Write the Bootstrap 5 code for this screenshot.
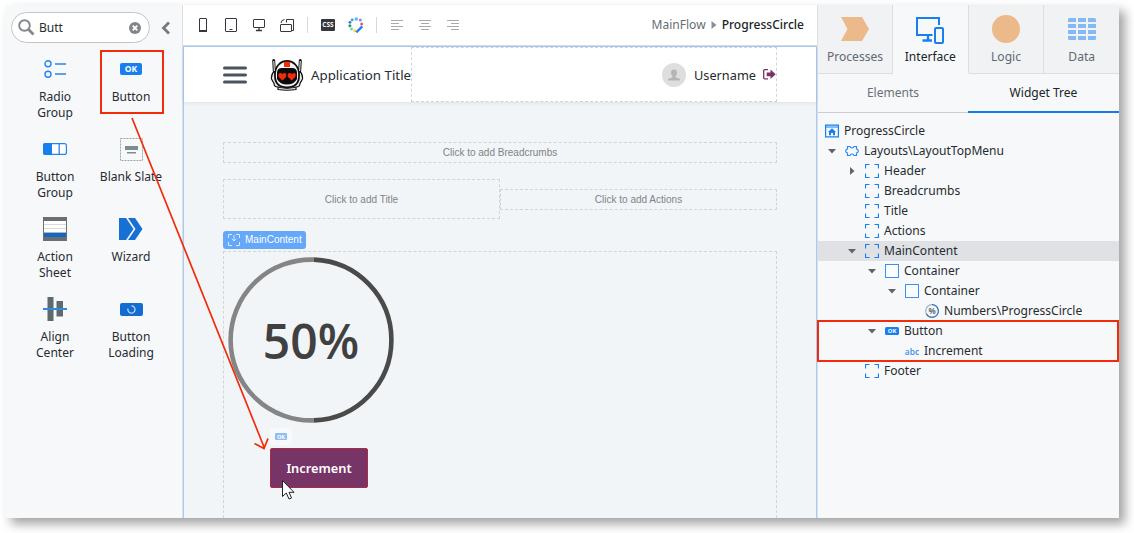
<!DOCTYPE html>
<html lang="en">
<head>
<meta charset="utf-8">
<meta name="viewport" content="width=device-width, initial-scale=1">
<title>ProgressCircle</title>
<link href="https://cdn.jsdelivr.net/npm/bootstrap@5.3.0/dist/css/bootstrap.min.css" rel="stylesheet">
<style>
html{overflow:hidden}
body{background:#fff;font-family:"Noto Sans","Open Sans",sans-serif;font-size:12.05px;line-height:16px;color:#272b30;min-height:100vh;padding:5px}
svg{display:block;flex:none}
.studio{width:1114px;height:513px;background:#f6f8fa;box-shadow:6px 6px 10px rgba(0,0,0,.36)}
.toolbox{width:177px}
.search-pill{width:139px;height:31px;margin:7px 0 0 6px;border:1px solid #c3c5c8;border-radius:16px;background:#fff;padding:0 8px 0 6px}
.widgets{display:grid;grid-template-columns:76px 76px;grid-auto-rows:80px;margin:8px 0 0 12px}
.widget-icon{height:36px;margin-bottom:2px}
.widget-name{width:64px}
.picked{position:absolute;left:7px;top:-1px;width:64px;height:64px;border:2px solid #f22c0a}
.stage{width:636px;border-left:1px solid #dcdfe3;border-right:1px solid #dcdfe3;background:#fff}
.tools{height:41px;border-bottom:1px solid #dadde1;padding-left:6px}
.tool{width:28px}
.rule{width:1px;height:16px;background:#d5d8dc;margin:0 6px}
.crumbs{padding-right:13px}
.flow{color:#666d74}
.here{font-weight:500;color:#202428}
.page-canvas{border:1px solid #a6cbf9;border-bottom:0;background:#f1f5f8}
.app-header{height:55px;background:#fff;padding:0 39px;box-shadow:0 1px 4px rgba(60,80,100,.12)}
.robot{margin-left:23px}
.app-title{margin-left:7px;font-size:13.3px;white-space:nowrap}
.user-name{margin:0 7px 0 8px;font-size:12.75px}
.page-body{padding:40px 39px 0}
.drop{border:1px dashed #d0d5d8}
.hint{font:10px/12px "Liberation Sans",sans-serif;color:#808486}
.crumb-drop{height:21px}
.title-line{margin:16px 0 12px}
.title-drop{width:277.500px;height:40px;padding-top:1px}
.action-drop{width:277.500px;height:21px;margin-top:1px}
.content-tag{width:83px;height:18px;margin-bottom:2px;background:#65a7f8;border-radius:3px;color:#fff;font:10px/18px "Liberation Sans",sans-serif;padding-left:5px}
.tag-text{margin-left:5px}
.main-drop{border-bottom:0}
.ring{margin:4.500px 0 0 4px}
.ring-text{font:600 48px "Open Sans",sans-serif;fill:#404040}
.ok-tab{width:22px;height:17px;margin:5.500px 0 3px 46px;background:#f8f9fa;border-radius:3px}
.purple{width:98px;height:40px;margin-left:46px;background:#763467;border:1px solid #ab2c3f;border-radius:2px;color:#fff;font-weight:600;font-size:12.8px}
.side{width:301px}
.side-tab{height:69px;background:#f0f2f4;border-right:1px solid #dcdee1;border-bottom:1px solid #dcdee1;color:#616971;flex:1 1 0}
.side-tab:first-child{flex:0 0 75px}
.side-tab:last-child{border-right:0}
.side-tab.on{background:#f6f8fa;border-bottom-color:#f6f8fa;color:#202428}
.tab-pic{height:47px}
.tab-label{line-height:10px}
.sub{height:39px;border-bottom:1px solid #cbcdd0;color:#697078;flex:0 0 150px}
.sub.on{border-bottom:2px solid #147bec;color:#202428;flex:1}
.tree{padding-top:8px}
.tree-row{height:20px;white-space:nowrap}
.tree-row .caret-mark{margin-left:-20px;margin-right:6px}
.tree-row .glyph{margin-right:5px}
.l0{padding-left:7px}.l1{padding-left:27px}.l2{padding-left:47px}.l3{padding-left:67px}.l4{padding-left:87px}.l5{padding-left:107px}
.sel{background:#dfe1e4}
.marked{position:absolute;left:-1px;right:0;top:207px;height:42px;border:2px solid #f22c0a}
.overlay{position:absolute;left:0;top:0;pointer-events:none;z-index:5}
.ok{font-family:"Open Sans",sans-serif;font-weight:700;fill:#fff;text-anchor:middle}
</style>
</head>
<body>
<svg width="0" height="0" class="position-absolute">
<defs>
<symbol id="slot" viewBox="0 0 14 14"><path d="M.5 4.500V.5H4.500M9.500 .5H13.500V4.500M13.500 9.500V13.500H9.500M4.500 13.500H.5V9.500" fill="none" stroke="#1a80ee" stroke-width="1.200"/></symbol>
<symbol id="down" viewBox="0 0 14 14"><path d="M3 5H11L7 9.500Z" fill="#60656a"/></symbol>
<symbol id="right" viewBox="0 0 14 14"><path d="M5 3V11L9.500 7Z" fill="#60656a"/></symbol>
<symbol id="box" viewBox="0 0 14 14"><rect x=".5" y=".5" width="13" height="13" fill="#fafcff" stroke="#3a91f0"/></symbol>
</defs>
</svg>
<div class="studio d-flex">
  <aside class="toolbox">
    <div class="d-flex align-items-center">
      <div class="search-pill d-flex align-items-center">
        <svg width="17" height="17" viewBox="0 0 17 17" fill="none" stroke="#85888b"><circle cx="6.500" cy="6.500" r="5.300" stroke-width="1.900"/><path d="M10.300 10.300L15.500 15.500" stroke-width="2.800"/></svg>
        <span class="flex-grow-1 ps-1">Butt</span>
        <svg width="12" height="12" viewBox="0 0 12 12"><circle cx="6" cy="6" r="6" fill="#828588"/><path d="M3.700 3.700L8.300 8.300M8.300 3.700L3.700 8.300" stroke="#fff" stroke-width="1.900"/></svg>
      </div>
      <svg class="mt-2 ms-2" width="20" height="14" viewBox="0 0 20 14"><path d="M11 1.500L5.500 7L11 12.500" fill="none" stroke="#787b7e" stroke-width="2.800"/></svg>
    </div>
    <div class="widgets text-center">
      <div><div class="widget-icon d-flex align-items-center justify-content-center">
        <svg width="22" height="18" viewBox="0 0 22 18" fill="none" stroke="#2485ef" stroke-width="1.400"><circle cx="4" cy="3.800" r="3"/><circle cx="4" cy="14.200" r="3"/><path d="M11 4H22M11 14H22"/></svg></div>
        <div class="widget-name mx-auto">Radio Group</div></div>
      <div class="position-relative"><div class="widget-icon d-flex align-items-center justify-content-center">
        <svg width="22" height="12" viewBox="0 0 22 12"><rect width="22" height="12" rx="2" fill="#1780ee"/><text class="ok" x="11" y="9.200" font-size="8.500">OK</text></svg></div>
        <div class="widget-name mx-auto">Button</div><div class="picked"></div></div>
      <div><div class="widget-icon d-flex align-items-center justify-content-center">
        <svg width="24" height="12" viewBox="0 0 24 12"><rect x=".6" y=".6" width="22.800" height="10.800" rx="2" fill="#fff" stroke="#2485ef" stroke-width="1.200"/><path d="M2 0H9V12H2Q0 12 0 10V2Q0 0 2 0Z" fill="#1780ee"/><path d="M16.200 0V12" stroke="#2485ef" stroke-width="1.300"/></svg></div>
        <div class="widget-name mx-auto">Button Group</div></div>
      <div><div class="widget-icon d-flex align-items-center justify-content-center">
        <svg width="23" height="23" viewBox="0 0 23 23"><rect x=".5" y=".5" width="22" height="22" fill="none" stroke="#9aa5a8" stroke-dasharray="2 1"/><path d="M5 8H18V12H5ZM7 14H16V15.500H7Z" fill="#7f8c8d"/></svg></div>
        <div class="text-nowrap">Blank Slate</div></div>
      <div><div class="widget-icon d-flex align-items-center justify-content-center">
        <svg width="24" height="24" viewBox="0 0 24 24"><path fill="#6c6f71" d="M0 0H24V24H0Z"/><path fill="#fff" d="M1 4H23V15.500H1Z"/><path d="M1 7.500H23M1 11.500H23" stroke="#d8dadb"/><path fill="#1467c6" d="M1 16H23V20H1Z"/></svg></div>
        <div class="widget-name mx-auto">Action Sheet</div></div>
      <div><div class="widget-icon d-flex align-items-center justify-content-center">
        <svg width="24" height="22" viewBox="0 0 24 22"><path d="M0 0H7L14.500 11L7 22H0Z" fill="#1771d4"/><path d="M9 0H16L23.500 11L16 22H9L16.500 11Z" fill="#1771d4"/></svg></div>
        <div class="widget-name mx-auto">Wizard</div></div>
      <div><div class="widget-icon d-flex align-items-center justify-content-center">
        <svg width="24" height="24" viewBox="0 0 24 24"><path d="M4.500 0H10.500V24H4.500ZM13.500 4H20V19.500H13.500Z" fill="#5e6b6e"/><path d="M0 12H24" stroke="#3286e4" stroke-width="2"/></svg></div>
        <div class="widget-name mx-auto">Align Center</div></div>
      <div><div class="widget-icon d-flex align-items-center justify-content-center">
        <svg width="23" height="13" viewBox="0 0 23 13"><rect width="23" height="13" rx="2" fill="#146bd0"/><path d="M8 5.500A3.600 3.600 0 1 0 11.500 2.900" fill="none" stroke="#c4ddf7" stroke-width="1.200"/></svg></div>
        <div class="widget-name mx-auto">Button Loading</div></div>
    </div>
  </aside>

  <main class="stage d-flex flex-column">
    <div class="tools d-flex align-items-center">
      <div class="tool"><svg class="mx-auto" width="8" height="14" viewBox="0 0 8 14"><rect x=".5" y=".5" width="7" height="13" rx=".5" fill="none" stroke="#34383c"/><path fill="#34383c" d="M0 12H8V14H0Z"/></svg></div>
      <div class="tool"><svg class="mx-auto" width="12" height="14" viewBox="0 0 12 14"><rect x=".5" y=".5" width="11" height="13" rx=".5" fill="none" stroke="#34383c"/><path d="M4.500 11.500H7.500" stroke="#34383c"/></svg></div>
      <div class="tool"><svg class="mx-auto" width="12" height="13" viewBox="0 0 12 13"><rect x=".5" y=".5" width="11" height="8" rx=".5" fill="none" stroke="#34383c"/><path d="M6 8.500V11M3 11.500H9" stroke="#34383c" stroke-width="1.300"/></svg></div>
      <div class="tool"><svg class="mx-auto" width="14" height="15" viewBox="0 0 14 15" fill="none" stroke="#34383c"><rect x=".5" y="6.500" width="11" height="7" rx=".5"/><path d="M6.500 4.500V1.500H13.500V12.500H11.500M1 5Q1 2 4.500 1.500"/></svg></div>
      <div class="rule"></div>
      <div class="tool"><svg class="mx-auto" width="14" height="12" viewBox="0 0 14 12"><rect width="14" height="12" rx="1" fill="#34383c"/><text class="ok" x="7" y="8.200" font-size="6.500">CSS</text></svg></div>
      <div class="tool"><svg class="mx-auto" width="16" height="16" viewBox="0 0 16 16"><circle cx="8.300" cy="2" r="1.700" fill="#4dbdf3"/><circle cx="4.200" cy="2.800" r="1.500" fill="#5a9fe0"/><circle cx="12.300" cy="3" r="1.500" fill="#9a7fe8"/><circle cx="2" cy="5.300" r="1.400" fill="#2f78c9"/><circle cx="1.900" cy="8.700" r="1.500" fill="#1d9a74"/><circle cx="3.500" cy="12" r="1.500" fill="#6edc98"/><circle cx="6.800" cy="13.800" r="1.500" fill="#fbd33f"/><circle cx="13.600" cy="7" r="1.500" fill="#ee5a68"/><path d="M8.300 15.300L14.300 9.300" stroke="#2382ee" stroke-width="2.400"/></svg></div>
      <div class="rule"></div>
      <div class="tool"><svg class="mx-auto" width="12" height="11" viewBox="0 0 12 11" stroke="#a7a9ab"><path d="M0 .5H12M0 3.500H8M0 6.500H12M0 9.500H8"/></svg></div>
      <div class="tool"><svg class="mx-auto" width="12" height="11" viewBox="0 0 12 11" stroke="#a7a9ab"><path d="M0 .5H12M2 3.500H10M0 6.500H12M2 9.500H10"/></svg></div>
      <div class="tool"><svg class="mx-auto" width="12" height="11" viewBox="0 0 12 11" stroke="#a7a9ab"><path d="M0 .5H12M4 3.500H12M0 6.500H12M4 9.500H12"/></svg></div>
      <div class="crumbs ms-auto d-flex align-items-center"><span class="flow">MainFlow</span><svg class="mx-1" width="8" height="8" viewBox="0 0 8 8"><path d="M1.500 0V8L6.500 4Z" fill="#8a8e92"/></svg><span class="here">ProgressCircle</span></div>
    </div>
    <div class="page-canvas flex-grow-1 d-flex flex-column">
      <header class="app-header d-flex align-items-center">
        <svg width="24" height="18" viewBox="0 0 24 18" stroke="#4a545e" stroke-width="3" stroke-linecap="round"><path d="M1.500 2H22.500M1.500 9H22.500M1.500 16H22.500"/></svg>
        <svg class="robot" width="34" height="32" viewBox="0 0 34 32"><path d="M4.500 12Q1 15 1.500 20L4 24.500Q4 28 8 28V30.500Q17 32 26 30.500V28Q30 28 30 24.500L32.500 20Q33 15 29.500 12" fill="#e9e9e9" stroke="#111" stroke-width="1.200"/><path d="M5 17C4-3 30-3 29 17Q29 28 17 28.500Q5 28 5 17Z" fill="#f4f4f4" stroke="#111" stroke-width="1.800"/><path d="M14 3.200Q17 2 20 3.200V8H14Z" fill="#ef2b08"/><path d="M7 14Q7 9 12 9H22Q27 9 27 14V20Q24 25.500 17 25.500Q10 25.500 7 20Z" fill="#0b0b0b"/><path d="M12.500 21.500L8.700 18Q7.500 14.300 10.500 14Q12.200 14 12.500 15.300Q13.500 13.800 15.500 14.200Q17.300 15.500 16 18ZM21.700 21.500L18 18Q16.800 14.300 19.800 14Q21.500 14 21.900 15.300Q22.900 13.800 24.900 14.200Q26.600 15.500 25.300 18Z" fill="#f32b08"/><path d="M3.700 1.500L4.300 12M30.300 1.500L29.700 12" stroke="#111" stroke-width="3" stroke-linecap="round"/><path d="M3.800 2L4.300 12M30.200 2L29.700 12" stroke="#fff"/><path d="M8 28.300Q17 30.500 26 28.300" fill="none" stroke="#222"/></svg>
        <span class="app-title">Application Title</span>
        <div class="drop header-drop align-self-stretch flex-grow-1 d-flex align-items-center justify-content-end">
          <svg width="24" height="24" viewBox="0 0 24 24"><circle cx="12" cy="12" r="12" fill="#dedede"/><path d="M12 6.500A3 3 0 0 1 15 9.500Q15 12 13.500 13.200V14.200L18 16V17.500H6V16L10.500 14.200V13.200Q9 12 9 9.500A3 3 0 0 1 12 6.500Z" fill="#b5b5b5"/></svg>
          <span class="user-name">Username</span>
          <svg width="13" height="11" viewBox="0 0 13 11"><path d="M5 .7H1.500Q.7 .7 .7 1.500V9Q.7 9.800 1.500 9.800H5" fill="none" stroke="#763467" stroke-width="1.300"/><path d="M3.700 3.500H7.500V.5L12.700 5.300L7.500 10V7.200H3.700Z" fill="#763467"/></svg>
        </div>
      </header>
      <div class="page-body flex-grow-1 d-flex flex-column">
        <div class="drop crumb-drop hint d-flex align-items-center justify-content-center">Click to add Breadcrumbs</div>
        <div class="d-flex align-items-center title-line">
          <div class="drop title-drop hint d-flex align-items-center justify-content-center">Click to add Title</div>
          <div class="drop action-drop hint d-flex align-items-center justify-content-center">Click to add Actions</div>
        </div>
        <div class="content-tag d-flex align-items-center"><svg width="12" height="12" viewBox="0 0 12 12" fill="none" stroke="#d9eaff"><path d="M.5 4V.5H4M8 .5H11.500V4M11.500 8V11.500H8M4 11.500H.5V8M6 1V7M3.800 4.800L6 7L8.200 4.800"/></svg><span class="tag-text">MainContent</span></div>
        <div class="drop main-drop flex-grow-1">
          <svg class="ring" width="166" height="166" viewBox="0 0 166 166" fill="none" stroke-width="4.600"><path d="M86 2.656A80.400 80.400 0 0 1 86 163.344" stroke="#4a4a4a"/><path d="M86 163.344A80.400 80.400 0 1 1 86 2.656" stroke="#858585"/><text class="ring-text" x="83" y="101.500" text-anchor="middle">50%</text></svg>
          <div class="ok-tab d-flex align-items-center justify-content-center"><svg width="12" height="7" viewBox="0 0 12 7"><rect width="12" height="7" rx="1" fill="#8dbff5"/><text class="ok" x="6" y="5.600" font-size="5.500">OK</text></svg></div>
          <div class="purple d-flex align-items-center justify-content-center">Increment</div>
        </div>
      </div>
    </div>
  </main>

  <aside class="side">
    <div class="d-flex text-center">
      <div class="side-tab"><div class="tab-pic d-flex align-items-center justify-content-center"><svg width="28" height="24" viewBox="0 0 28 24"><path d="M0 0H21L28 12L21 24H0L6.500 12Z" fill="#ecb98b"/></svg></div><div class="tab-label">Processes</div></div>
      <div class="side-tab on"><div class="tab-pic d-flex align-items-center justify-content-center"><svg class="mt-1" width="28" height="27" viewBox="0 0 28 27" fill="none" stroke="#1780ee" stroke-width="2"><path d="M16.500 18H1V1H23V8"/><rect x="19" y="11" width="8" height="15" rx="1"/><path d="M12 18V23M6.500 23.500H16" stroke-width="2.400"/></svg></div><div class="tab-label">Interface</div></div>
      <div class="side-tab"><div class="tab-pic d-flex align-items-center justify-content-center"><svg width="28" height="28" viewBox="0 0 28 28"><circle cx="14" cy="14" r="14" fill="#ecb98b"/></svg></div><div class="tab-label">Logic</div></div>
      <div class="side-tab"><div class="tab-pic d-flex align-items-center justify-content-center"><svg width="28" height="22" viewBox="0 0 28 22"><rect width="28" height="22" rx="1.500" fill="#85b9f3"/><path d="M0 5H28M0 11H28M0 17H28" stroke="#f0f2f4" stroke-width="2"/><path d="M9 0V22M19 0V22" stroke="#f0f2f4" stroke-width="2"/></svg></div><div class="tab-label">Data</div></div>
    </div>
    <div class="d-flex">
      <div class="sub d-flex align-items-center justify-content-center">Elements</div>
      <div class="sub on d-flex align-items-center justify-content-center">Widget Tree</div>
    </div>
    <div class="tree position-relative">
      <div class="tree-row l0 d-flex align-items-center"><svg class="glyph" width="14" height="14" viewBox="0 0 14 14"><path d="M.6 1.100H13.400V12.900H.6ZM0 3H14" fill="none" stroke="#1780ee" stroke-width="1.200"/><path d="M7 4.200L11 8H10V11.300H8V9H6V11.300H4V8H3Z" fill="#1780ee"/></svg>ProgressCircle</div>
      <div class="tree-row l1 d-flex align-items-center"><svg class="caret-mark" width="14" height="14"><use href="#down"/></svg><svg class="glyph" width="14" height="14" viewBox="0 0 14 14"><path d="M2.500 2.500H5Q5.200 4 7 4Q8.800 4 9 2.500H11.500V5Q13.300 5.200 13.300 7Q13.300 8.800 11.500 9V11.500H9Q8.800 10 7 10Q5.200 10 5 11.500H2.500V9Q.7 8.800 .7 7Q.7 5.200 2.500 5Z" fill="none" stroke="#2b88ee" stroke-width="1.200"/></svg>Layouts\LayoutTopMenu</div>
      <div class="tree-row l2 d-flex align-items-center"><svg class="caret-mark" width="14" height="14"><use href="#right"/></svg><svg class="glyph" width="14" height="14"><use href="#slot"/></svg>Header</div>
      <div class="tree-row l2 d-flex align-items-center"><svg class="glyph" width="14" height="14"><use href="#slot"/></svg>Breadcrumbs</div>
      <div class="tree-row l2 d-flex align-items-center"><svg class="glyph" width="14" height="14"><use href="#slot"/></svg>Title</div>
      <div class="tree-row l2 d-flex align-items-center"><svg class="glyph" width="14" height="14"><use href="#slot"/></svg>Actions</div>
      <div class="tree-row sel l2 d-flex align-items-center"><svg class="caret-mark" width="14" height="14"><use href="#down"/></svg><svg class="glyph" width="14" height="14"><use href="#slot"/></svg>MainContent</div>
      <div class="tree-row l3 d-flex align-items-center"><svg class="caret-mark" width="14" height="14"><use href="#down"/></svg><svg class="glyph" width="14" height="14"><use href="#box"/></svg>Container</div>
      <div class="tree-row l4 d-flex align-items-center"><svg class="caret-mark" width="14" height="14"><use href="#down"/></svg><svg class="glyph" width="14" height="14"><use href="#box"/></svg>Container</div>
      <div class="tree-row l5 d-flex align-items-center"><svg class="glyph" width="14" height="14" viewBox="0 0 14 14" fill="none"><circle cx="7" cy="7" r="6.300" stroke="#a9b0b6" stroke-width="1.200"/><path d="M7 .7A6.300 6.300 0 1 1 1.500 10" stroke="#2c78cc" stroke-width="1.200"/><text x="7" y="10" text-anchor="middle" font-size="8" font-weight="700" fill="#686d72">%</text></svg>Numbers\ProgressCircle</div>
      <div class="tree-row l3 d-flex align-items-center"><svg class="caret-mark" width="14" height="14"><use href="#down"/></svg><svg class="glyph" width="14" height="8" viewBox="0 0 14 8"><rect width="14" height="8" rx="1.500" fill="#1780ee"/><text class="ok" x="7" y="6.200" font-size="5.800">OK</text></svg>Button</div>
      <div class="tree-row l4 d-flex align-items-center"><svg class="glyph" width="14" height="14" viewBox="0 0 14 14"><text x="-.2" y="10.700" font-size="9" font-weight="600" textLength="14.400" lengthAdjust="spacingAndGlyphs" fill="#4c97ea">abc</text></svg>Increment</div>
      <div class="tree-row l2 d-flex align-items-center"><svg class="glyph" width="14" height="14"><use href="#slot"/></svg>Footer</div>
      <div class="marked"></div>
    </div>
  </aside>
</div>
<svg class="overlay" width="1134" height="533" viewBox="0 0 1134 533">
  <path d="M132 118L264 447M254.500 443.500L264 448.500L268 438.500" fill="none" stroke="#f22c0a" stroke-width="1.700"/>
  <path d="M282.500 480.500V496.500L286.300 493L289 499L291.500 498L289 492.300H294Z" fill="#fff" stroke="#222" stroke-width="1"/>
</svg>
<script src="https://cdn.jsdelivr.net/npm/bootstrap@5.3.0/dist/js/bootstrap.bundle.min.js"></script>
</body>
</html>
